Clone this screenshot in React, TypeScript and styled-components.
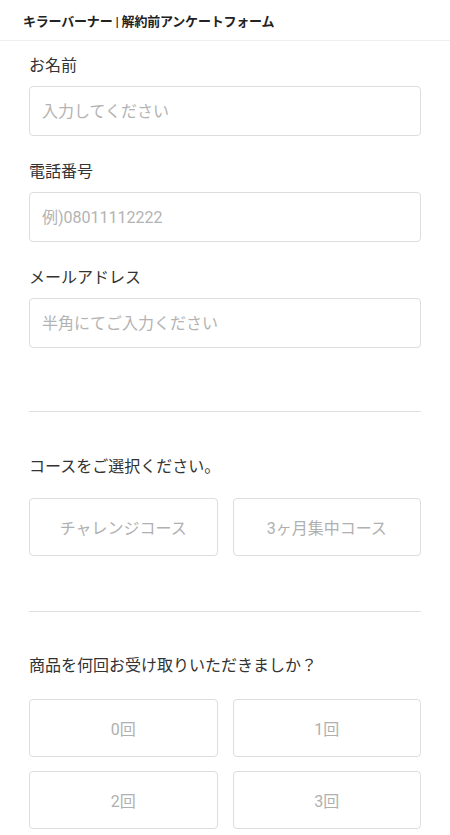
import React from 'react';
import styled, { createGlobalStyle } from 'styled-components';

const GlobalStyle = createGlobalStyle`
  * {
    box-sizing: border-box;
  }

  body {
    margin: 0;
    background: #ffffff;
    font-family: Roboto, "Noto Sans CJK JP", sans-serif;
    color: #333333;
  }
`;

const Header = styled.header`
  height: 41px;
  display: flex;
  align-items: center;
  padding: 0 23px;
  border-bottom: 1px solid #eeeeee;
`;

const Title = styled.h1`
  margin: 0;
  font-size: 13px;
  font-weight: 700;
  color: #222222;
  letter-spacing: -0.2px;
`;

const Form = styled.form`
  padding: 13px 29px 0;
`;

const Field = styled.div<{ gapTop?: number }>`
  display: flex;
  flex-direction: column;
  margin-top: ${(props) => props.gapTop || 0}px;
`;

const Label = styled.label<{ spacing?: number }>`
  font-size: 16px;
  line-height: 24px;
  color: #333333;
  margin-bottom: ${(props) => props.spacing || 8}px;
`;

const TextInput = styled.input`
  height: 50px;
  width: 100%;
  border: 1px solid #dddddd;
  border-radius: 4px;
  padding: 0 12px;
  font-family: inherit;
  font-size: 16px;
  color: #333333;
  outline: none;

  &::placeholder {
    color: #b3b3b3;
    opacity: 1;
  }
`;

const Divider = styled.hr<{ top: number; bottom: number }>`
  border: 0;
  border-top: 1px solid #e0e0e0;
  margin: ${(props) => props.top}px 0 ${(props) => props.bottom}px;
`;

const Choices = styled.div<{ rowGap?: number }>`
  display: grid;
  grid-template-columns: 1fr 1fr;
  column-gap: 15px;
  row-gap: ${(props) => props.rowGap || 14}px;
`;

const Choice = styled.button`
  height: 58px;
  border: 1px solid #dddddd;
  border-radius: 4px;
  background: #ffffff;
  font-family: inherit;
  font-size: 16px;
  color: #b0b0b0;
  cursor: pointer;
`;

const fields = [
  { label: 'お名前', placeholder: '入力してください' },
  { label: '電話番号', placeholder: '例)08011112222' },
  { label: 'メールアドレス', placeholder: '半角にてご入力ください' },
];

const courses = ['チャレンジコース', '3ヶ月集中コース'];
const counts = ['0回', '1回', '2回', '3回'];

const App = () => (
  <>
    <GlobalStyle />
    <Header>
      <Title>キラーバーナー | 解約前アンケートフォーム</Title>
    </Header>
    <Form>
      {fields.map((field, i) => (
        <Field key={field.label} gapTop={i === 0 ? 0 : 24}>
          <Label>{field.label}</Label>
          <TextInput placeholder={field.placeholder} />
        </Field>
      ))}
      <Divider top={63} bottom={43} />
      <Field>
        <Label spacing={19}>コースをご選択ください。</Label>
        <Choices>
          {courses.map((course) => (
            <Choice type="button" key={course}>{course}</Choice>
          ))}
        </Choices>
      </Field>
      <Divider top={55} bottom={42} />
      <Field>
        <Label spacing={21}>商品を何回お受け取りいただきましか？</Label>
        <Choices rowGap={14}>
          {counts.map((count) => (
            <Choice type="button" key={count}>{count}</Choice>
          ))}
        </Choices>
      </Field>
    </Form>
  </>
);

export default App;
